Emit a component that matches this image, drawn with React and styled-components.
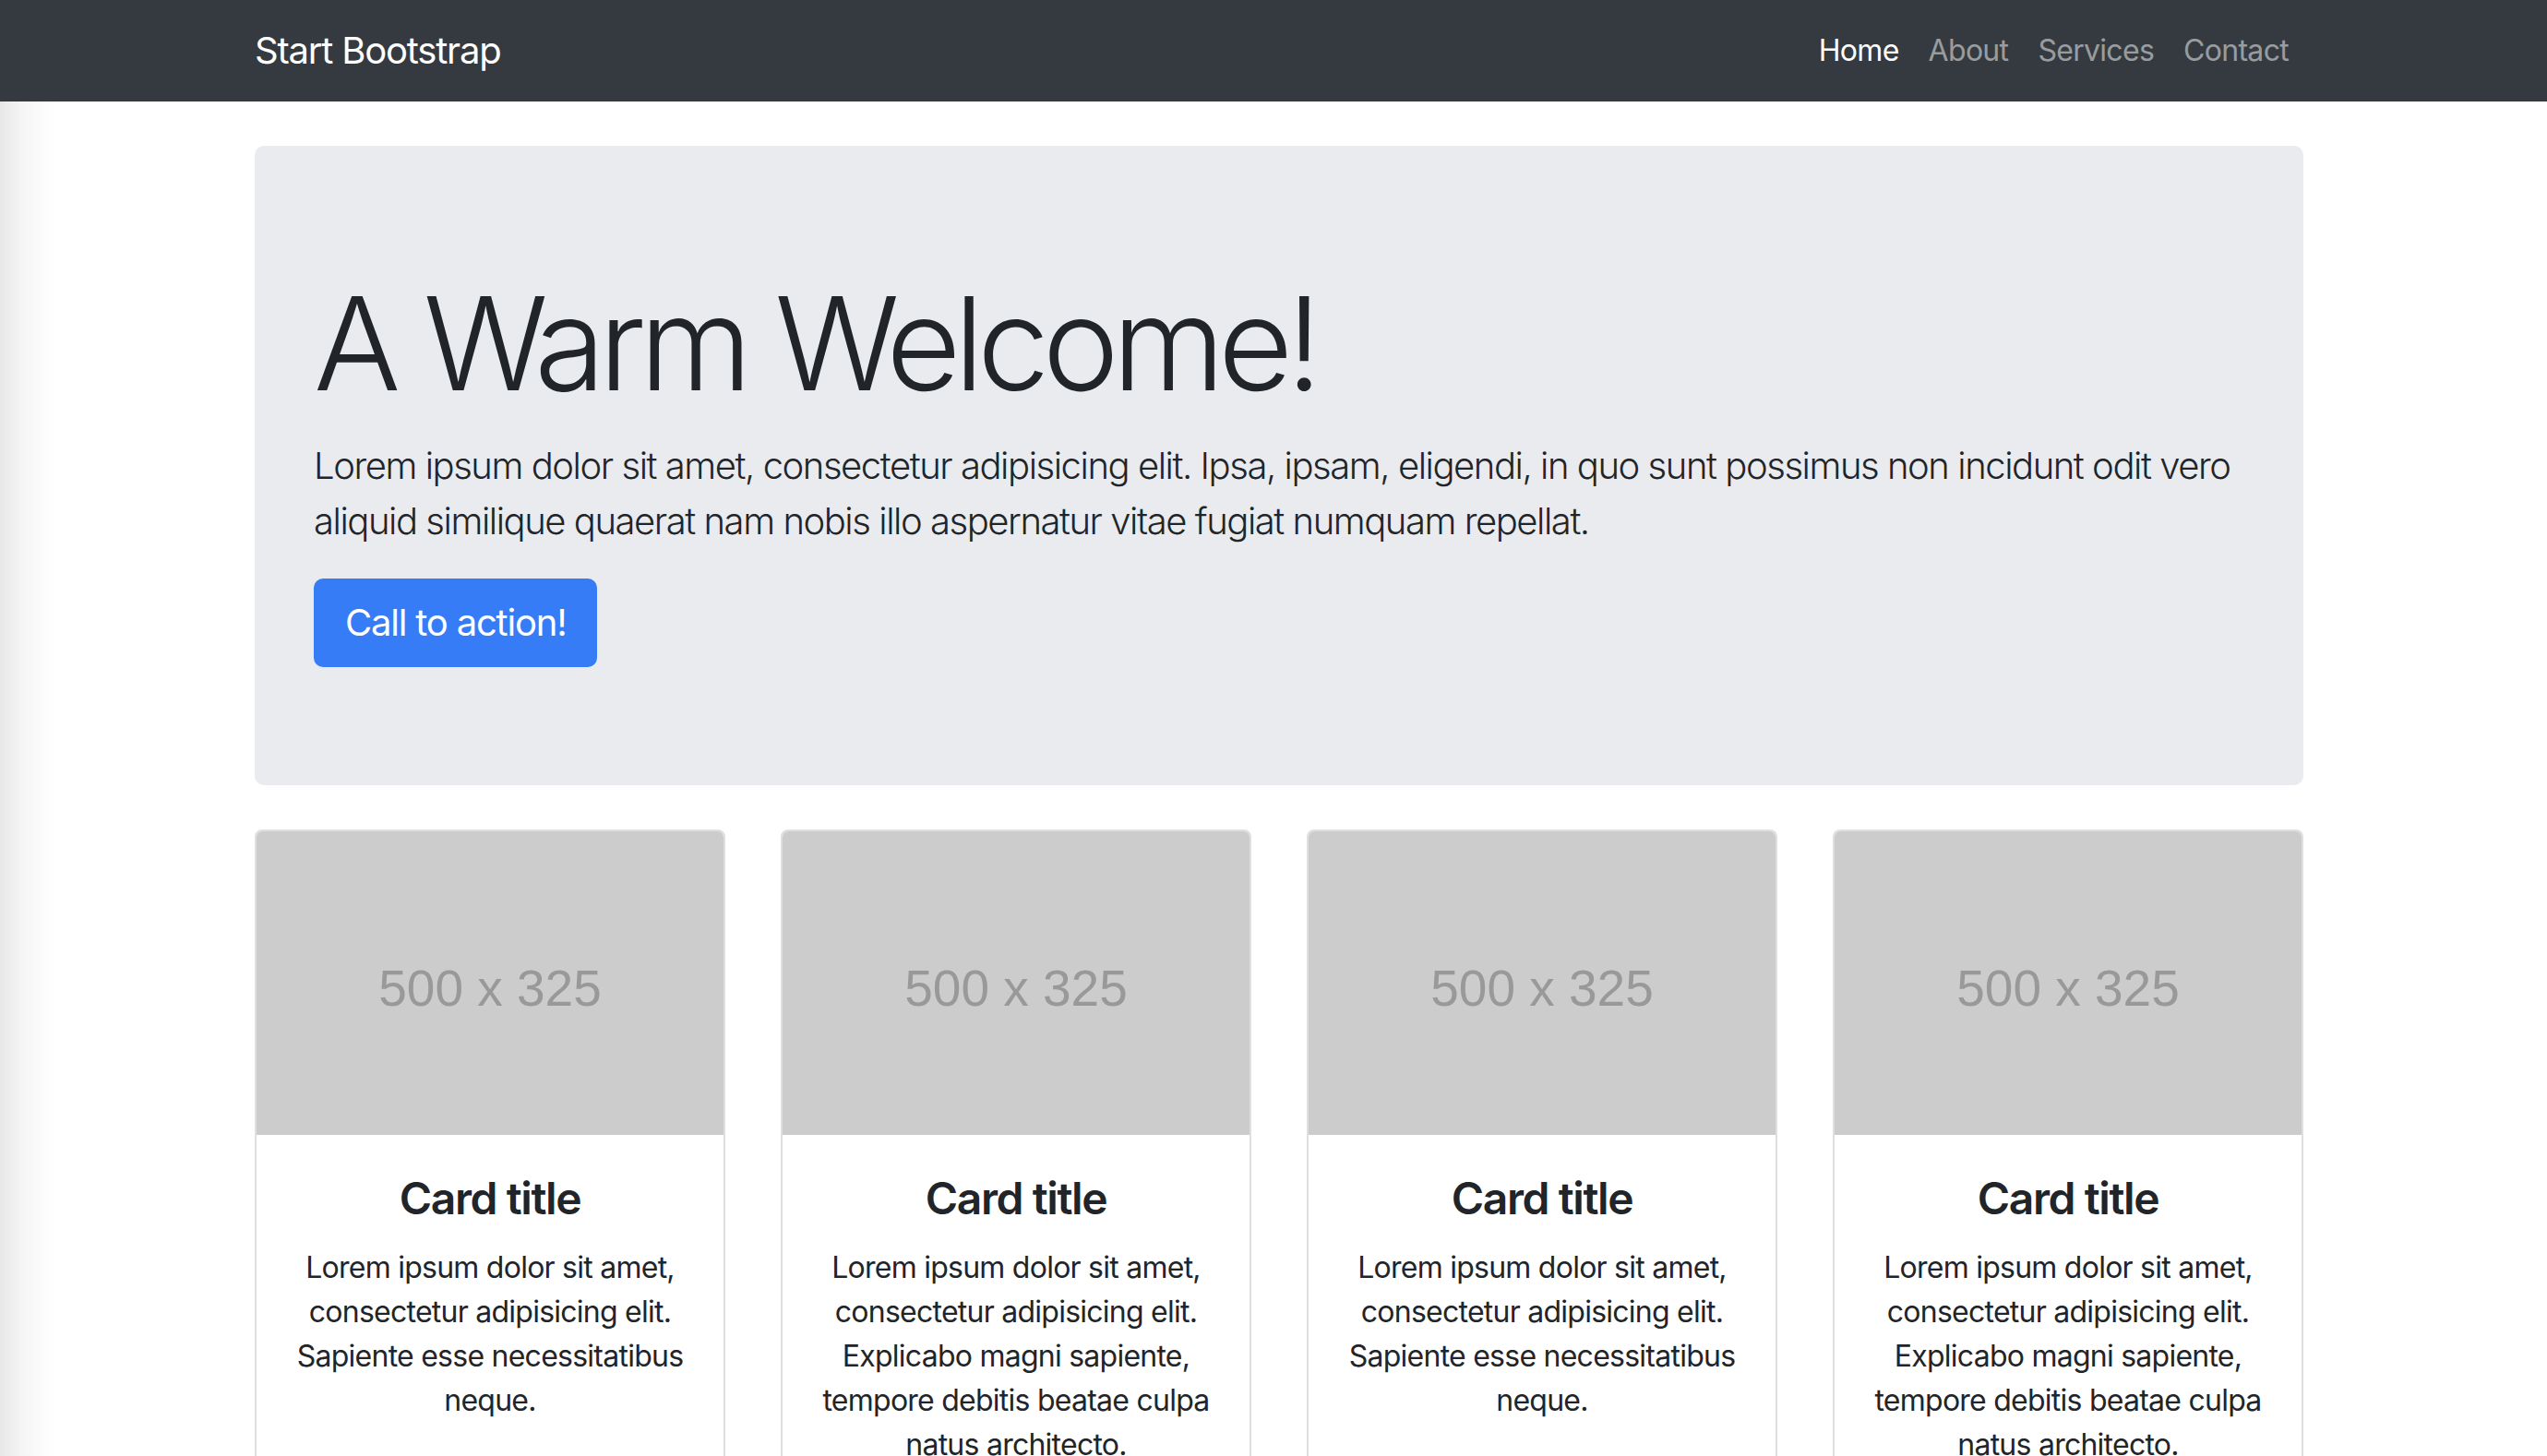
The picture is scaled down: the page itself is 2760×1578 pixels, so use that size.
import React from "react";
import styled, { createGlobalStyle } from "styled-components";

const GlobalStyle = createGlobalStyle`
  * { box-sizing: border-box; }
  body {
    margin: 0;
    font-family: Inter, "Noto Sans", "Liberation Sans", sans-serif;
    color: #212529;
    background: linear-gradient(to right, #e7e7e7 0px, #f5f5f5 24px, #fdfdfd 50px, #fff 64px);
  }
`;

const cards = [
  "Lorem ipsum dolor sit amet, consectetur adipisicing elit. Sapiente esse necessitatibus neque.",
  "Lorem ipsum dolor sit amet, consectetur adipisicing elit. Explicabo magni sapiente, tempore debitis beatae culpa natus architecto.",
  "Lorem ipsum dolor sit amet, consectetur adipisicing elit. Sapiente esse necessitatibus neque.",
  "Lorem ipsum dolor sit amet, consectetur adipisicing elit. Explicabo magni sapiente, tempore debitis beatae culpa natus architecto.",
];

function App() {
  return (
    <>
      <GlobalStyle />
      <Navbar>
        <Container>
          <Brand href="#">Start Bootstrap</Brand>
          <NavLinks>
            <NavLink href="#" active>Home</NavLink>
            <NavLink href="#">About</NavLink>
            <NavLink href="#">Services</NavLink>
            <NavLink href="#">Contact</NavLink>
          </NavLinks>
        </Container>
      </Navbar>

      <Page>
        <Container column>
          <Jumbotron>
            <Display>A Warm Welcome!</Display>
            <Lead>
              Lorem ipsum dolor sit amet, consectetur adipisicing elit. Ipsa, ipsam, eligendi, in quo sunt possimus non incidunt odit vero aliquid similique quaerat nam nobis illo aspernatur vitae fugiat numquam repellat.
            </Lead>
            <CtaButton href="#">Call to action!</CtaButton>
          </Jumbotron>

          <CardRow>
            {cards.map((text, i) => (
              <Card key={i}>
                <CardImage>500 x 325</CardImage>
                <CardBody>
                  <CardTitle>Card title</CardTitle>
                  <CardText>{text}</CardText>
                </CardBody>
                <CardFooter>
                  <SmallButton href="#">Find Out More!</SmallButton>
                </CardFooter>
              </Card>
            ))}
          </CardRow>
        </Container>
      </Page>
    </>
  );
}

const Navbar = styled.nav`
  background-color: #343a40;
  height: 110px;
  padding-left: 12px;
  display: flex;
`;

const Container = styled.div`
  width: 2220px;
  margin: 0 auto;
  display: flex;
  flex-direction: ${(p) => (p.column ? "column" : "row")};
  align-items: ${(p) => (p.column ? "stretch" : "center")};
  justify-content: space-between;
`;

const Brand = styled.a`
  color: #fff;
  font-size: 40px;
  line-height: 60px;
  text-decoration: none;
  letter-spacing: -1.2px;
`;

const NavLinks = styled.div`
  display: flex;
`;

const NavLink = styled.a`
  color: ${(p) => (p.active ? "#fff" : "rgba(255,255,255,0.5)")};
  font-size: 32px;
  line-height: 48px;
  padding: 16px;
  text-decoration: none;
  letter-spacing: -0.7px;
`;

const Page = styled.main`
  padding-left: 12px;
`;

const Jumbotron = styled.section`
  background-color: #e9ebef;
  border-radius: 10px;
  margin: 48px 0;
  padding: 128px 64px;
`;

const Display = styled.h1`
  font-size: 140px;
  font-weight: 300;
  line-height: 173px;
  margin: 0 0 16px;
  letter-spacing: -7.5px;
`;

const Lead = styled.p`
  font-size: 40px;
  font-weight: 300;
  line-height: 60px;
  margin: 0 0 32px;
  letter-spacing: -1.45px;
`;

const CtaButton = styled.a`
  display: inline-block;
  align-self: flex-start;
  background-color: #367cf6;
  color: #fff;
  font-size: 40px;
  line-height: 60px;
  padding: 16px 32px;
  border: 2px solid #367cf6;
  border-radius: 10px;
  text-decoration: none;
  letter-spacing: -1.2px;
`;

const CardRow = styled.div`
  display: grid;
  grid-template-columns: repeat(4, 1fr);
  gap: 60px;
  margin-bottom: 48px;
`;

const Card = styled.div`
  display: flex;
  flex-direction: column;
  border: 2px solid rgba(0, 0, 0, 0.125);
  border-radius: 8px;
  overflow: hidden;
  background: #fff;
`;

const CardImage = styled.div`
  height: 329px;
  background-color: #cccccc;
  color: #999999;
  font-family: "Liberation Sans", Arial, sans-serif;
  font-size: 55px;
  display: flex;
  align-items: center;
  justify-content: center;
  padding-top: 10px;
`;

const CardBody = styled.div`
  padding: 40px;
  text-align: center;
  flex: 1;
`;

const CardTitle = styled.h4`
  font-size: 48px;
  font-weight: 600;
  line-height: 1.2;
  margin: 0 0 22px;
  letter-spacing: -1.4px;
`;

const CardText = styled.p`
  font-size: 32px;
  line-height: 48px;
  margin: 0;
  letter-spacing: -0.75px;
`;

const CardFooter = styled.div`
  padding: 24px 40px;
  background-color: rgba(0, 0, 0, 0.03);
  border-top: 2px solid rgba(0, 0, 0, 0.125);
  text-align: center;
`;

const SmallButton = styled.a`
  display: inline-block;
  background-color: #007bff;
  color: #fff;
  font-size: 32px;
  line-height: 48px;
  padding: 12px 24px;
  border-radius: 8px;
  text-decoration: none;
`;

export default App;
